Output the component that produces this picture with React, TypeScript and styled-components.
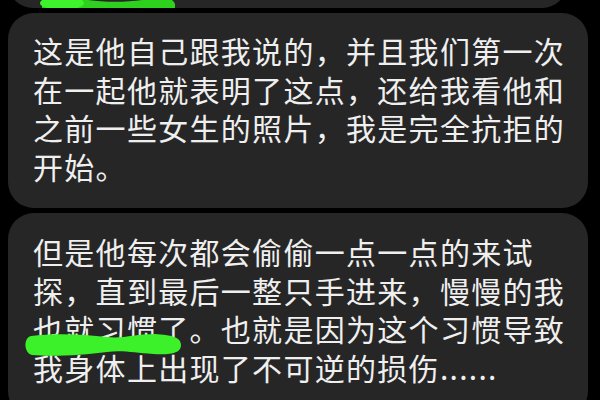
import styled, { createGlobalStyle } from "styled-components";

const GlobalStyle = createGlobalStyle`
  html, body {
    margin: 0;
    padding: 0;
    background: #000;
  }
  body {
    font-family: "Noto Sans CJK SC", "Noto Sans", sans-serif;
  }
`;

const Screen = styled.div`
  width: 600px;
  height: 400px;
  overflow: hidden;
  background: #000;
`;

const Thread = styled.div`
  display: flex;
  flex-direction: column;
  gap: 5px;
  margin-top: -42px;
  padding-left: 8px;
`;

const Bubble = styled.div<{ $width: number; $padTop: number; $padBottom: number }>`
  position: relative;
  box-sizing: border-box;
  width: ${(p) => p.$width}px;
  padding: ${(p) => p.$padTop}px 0 ${(p) => p.$padBottom}px 25px;
  background: #262626;
  border-radius: 26px;
  color: #efefef;
  font-size: 30px;
  letter-spacing: 1.3px;
  line-height: 38.7px;
`;

const Line = styled.div`
  white-space: nowrap;
`;

const Marker = styled.svg<{ $left: number; $top: number }>`
  position: absolute;
  left: ${(p) => p.$left}px;
  top: ${(p) => p.$top}px;
  pointer-events: none;
`;

export default function App() {
  return (
    <>
      <GlobalStyle />
      <Screen>
        <Thread>
          <Bubble $width={559} $padTop={50} $padBottom={0}>
            <Marker $left={30} $top={34} width="140" height="16" viewBox="0 0 140 16">
              <path
                d="M4 10 C 8 3, 30 4, 50 8 C 70 11, 95 10, 110 7 C 122 5, 134 4, 137 12 L 137 16 L 4 16 Z"
                fill="#2ed21e"
              />
              <ellipse cx="24" cy="11" rx="22" ry="7" fill="#3ef22c" />
            </Marker>
          </Bubble>

          <Bubble $width={580} $padTop={18} $padBottom={22}>
            <Line>这是他自己跟我说的，并且我们第一次</Line>
            <Line>在一起他就表明了这点，还给我看他和</Line>
            <Line>之前一些女生的照片，我是完全抗拒的</Line>
            <Line>开始。</Line>
          </Bubble>

          <Bubble $width={580} $padTop={19} $padBottom={30}>
            <Line>但是他每次都会偷偷一点一点的来试</Line>
            <Line>探，直到最后一整只手进来，慢慢的我</Line>
            <Line>也就习惯了。也就是因为这个习惯导致</Line>
            <Line>我身体上出现了不可逆的损伤......</Line>
            <Marker $left={15} $top={118} width="164" height="28" viewBox="0 0 164 28">
              <path
                d="M8 5 C 30 2, 60 3, 84 6 C 100 8, 112 3, 132 3 C 148 4, 158 6, 158 14 C 158 23, 146 24, 130 23 C 112 22, 100 19, 84 21 C 60 24, 30 26, 9 24 C 1 22, 0 7, 8 5 Z"
                fill="#3cf02a"
              />
            </Marker>
          </Bubble>
        </Thread>
      </Screen>
    </>
  );
}
